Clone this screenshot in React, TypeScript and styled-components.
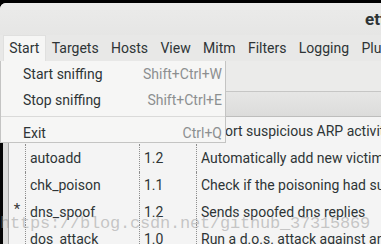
import React from 'react';
import styled, { createGlobalStyle } from 'styled-components';

const Global = createGlobalStyle`
  html, body {
    margin: 0;
    padding: 0;
    width: 381px;
    height: 244px;
    overflow: hidden;
    background: #000;
  }
  body {
    font-family: Roboto, "Noto Sans", sans-serif;
  }
`;

const Window = styled.div`
  position: relative;
  margin-top: 3px;
  height: 241px;
  background: #e8e8e7;
  border-top-left-radius: 6px;
  overflow: hidden;
  display: flex;
  flex-direction: column;
  color: #2e3436;
`;

const TitleBar = styled.div`
  flex: none;
  height: 32px;
  display: flex;
  align-items: center;
  padding-left: 365px;
  white-space: nowrap;
  font-size: 17px;
  font-weight: 700;
  background: linear-gradient(#ebebea, #e6e6e5);
`;

const MenuBar = styled.div`
  flex: none;
  height: 26px;
  display: flex;
  padding-left: 3px;
  font-size: 14px;
  white-space: nowrap;
  background: #e8e8e7;
`;

const MenuTitle = styled.div<{ $open?: boolean }>`
  display: flex;
  align-items: center;
  padding: 0 6.2px;
  background: ${(p) => (p.$open ? '#f6f6f5' : 'transparent')};
  box-shadow: ${(p) => (p.$open ? 'inset 1px 1px 0 #e0e0df, inset -1px 0 0 #e0e0df' : 'none')};
`;

const Toolbar = styled.div`
  flex: none;
  height: 30px;
  background: #ebebea;
  border-bottom: 1px solid #c6c6c5;
`;

const Header = styled.div`
  flex: none;
  height: 24px;
  background: linear-gradient(#e6e6e5, #dcdcdb);
  border-bottom: 1px solid #bdbdbc;
`;

const ListArea = styled.div`
  flex: 1;
  display: flex;
  min-height: 0;
`;

const EdgeStrip = styled.div`
  width: 3px;
  flex: none;
  background: #050505;
`;

const Gutter = styled.div`
  width: 5px;
  flex: none;
  background: #dcdcdb;
  border-right: 1px solid #a9a9a8;
`;

const List = styled.div`
  flex: 1;
  padding-top: 1px;
  background: #f4f4f4;
  font-size: 14px;
  white-space: nowrap;
  overflow: hidden;
`;

const Row = styled.div`
  display: grid;
  grid-template-columns: 16px 114px 57px 1fr;
  height: 26.8px;
`;

const Cell = styled.div<{ $first?: boolean; $center?: boolean }>`
  display: flex;
  align-items: center;
  justify-content: ${(p) => (p.$center ? 'center' : 'flex-start')};
  padding-left: ${(p) => (p.$first ? '0' : '4px')};
  border-left: ${(p) => (p.$first ? 'none' : '1px dotted #8e8e8e')};
  overflow: hidden;
`;

const Mark = styled.span`
  font-size: 15px;
  color: #3a3a3a;
  transform: translateY(-3px);
`;

const Dropdown = styled.div`
  position: absolute;
  top: 58px;
  left: 0;
  width: 224px;
  background: #f6f6f5;
  border: 1px solid #c4c4c3;
  border-top: none;
  font-size: 14px;
  white-space: nowrap;
  z-index: 2;
`;

const DropItem = styled.div<{ $h: number }>`
  height: ${(p) => p.$h}px;
  display: flex;
  align-items: center;
  justify-content: space-between;
  padding: 0 3px 0 22px;
`;

const Shortcut = styled.span`
  color: #8c8f90;
`;

const Separator = styled.div`
  height: 1px;
  margin: 3px 0 7px;
  background: #dadad9;
`;

const Watermark = styled.div`
  position: absolute;
  left: 0;
  top: 212px;
  font-family: "Liberation Mono", monospace;
  font-size: 17px;
  line-height: 17px;
  letter-spacing: -0.2px;
  color: rgba(150, 150, 150, 0.5);
  white-space: nowrap;
  pointer-events: none;
  z-index: 3;
`;

const menus = ['Start', 'Targets', 'Hosts', 'View', 'Mitm', 'Filters', 'Logging', 'Plugins'];

const plugins = [
  { mark: '', name: 'arp_cop', ver: '1.1', desc: 'Report suspicious ARP activity' },
  { mark: '', name: 'autoadd', ver: '1.2', desc: 'Automatically add new victims in the target range' },
  { mark: '', name: 'chk_poison', ver: '1.1', desc: 'Check if the poisoning had success' },
  { mark: '*', name: 'dns_spoof', ver: '1.2', desc: 'Sends spoofed dns replies' },
  { mark: '', name: 'dos_attack', ver: '1.0', desc: 'Run a d.o.s. attack against an IP address' },
];

export default function App() {
  return (
    <>
      <Global />
      <Window>
        <TitleBar>ettercap 0.8.2</TitleBar>
        <MenuBar>
          {menus.map((m, i) => (
            <MenuTitle key={m} $open={i === 0}>
              {m}
            </MenuTitle>
          ))}
        </MenuBar>
        <Toolbar />
        <Header />
        <ListArea>
          <EdgeStrip />
          <Gutter />
          <List>
            {plugins.map((p) => (
              <Row key={p.name}>
                <Cell $first $center>
                  <Mark>{p.mark}</Mark>
                </Cell>
                <Cell>{p.name}</Cell>
                <Cell>{p.ver}</Cell>
                <Cell>{p.desc}</Cell>
              </Row>
            ))}
          </List>
        </ListArea>
        <Dropdown>
          <DropItem $h={26}>
            <span>Start sniffing</span>
            <Shortcut>Shift+Ctrl+W</Shortcut>
          </DropItem>
          <DropItem $h={26}>
            <span>Stop sniffing</span>
            <Shortcut>Shift+Ctrl+E</Shortcut>
          </DropItem>
          <Separator />
          <DropItem $h={18}>
            <span>Exit</span>
            <Shortcut>Ctrl+Q</Shortcut>
          </DropItem>
        </Dropdown>
        <Watermark>https://blog.csdn.net/github_37315869</Watermark>
      </Window>
    </>
  );
}
